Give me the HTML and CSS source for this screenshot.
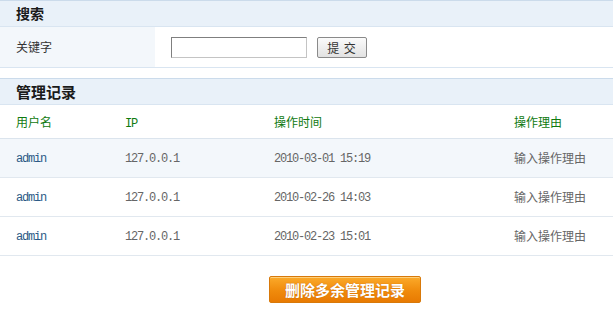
FILE: index.html
```html
<!DOCTYPE html>
<html lang="zh-CN">
<head>
    <meta charset="UTF-8">
    <title>管理记录</title>
    <link rel="stylesheet" href="styles.css">
</head>
<body>
    <div class="section">
        <div class="sec-title">搜索</div>
        <div class="search-row">
            <div class="label">关键字</div>
            <div class="field">
                <input type="text" class="kw">
                <button class="btn-submit">提 交</button>
            </div>
        </div>
    </div>

    <div class="section log">
        <div class="sec-title">管理记录</div>
        <div class="row head">
            <span>用户名</span>
            <span class="num">IP</span>
            <span>操作时间</span>
            <span>操作理由</span>
        </div>
        <div class="row alt">
            <span class="user">admin</span>
            <span class="num">127.0.0.1</span>
            <span class="num">2010-03-01 15:19</span>
            <span>输入操作理由</span>
        </div>
        <div class="row">
            <span class="user">admin</span>
            <span class="num">127.0.0.1</span>
            <span class="num">2010-02-26 14:03</span>
            <span>输入操作理由</span>
        </div>
        <div class="row">
            <span class="user">admin</span>
            <span class="num">127.0.0.1</span>
            <span class="num">2010-02-23 15:01</span>
            <span>输入操作理由</span>
        </div>
    </div>

    <div class="actions">
        <button class="btn-del">删除多余管理记录</button>
    </div>
</body>
</html>
```

FILE: styles.css
```css
body {
    margin: 0;
    font-family: "Noto Sans CJK SC", "Liberation Sans", sans-serif;
    font-size: 12px;
    color: #333;
    background: #fff;
    width: 613px;
}
.sec-title {
    height: 25px;
    line-height: 25px;
    padding-left: 16px;
    font-size: 14px;
    font-weight: bold;
    color: #1a1a1a;
    background: #e9f1f9;
    border-top: 1px solid #cbdbeb;
    border-bottom: 1px solid #d9e5f1;
}
.log .sec-title {
    font-size: 15px;
}
.search-row {
    display: flex;
    height: 40px;
    border-bottom: 1px solid #d9e5f1;
}
.search-row .label {
    width: 139px;
    padding-left: 16px;
    line-height: 40px;
    background: #f3f7fb;
}
.search-row .field {
    display: flex;
    align-items: center;
    padding-left: 16px;
    gap: 10px;
}
.kw {
    box-sizing: border-box;
    width: 136px;
    height: 21px;
    margin: 0;
    border: 1px solid #c4c4c4;
    border-top-color: #7f7f7f;
    border-left-color: #7f7f7f;
    padding: 0 2px;
}
.btn-submit {
    box-sizing: border-box;
    width: 50px;
    height: 21px;
    margin: 0;
    padding: 0;
    font-family: inherit;
    font-size: 12px;
    letter-spacing: 1px;
    color: #333;
    border: 1px solid #8a8a8a;
    border-radius: 2px;
    background: linear-gradient(#fbfbfb, #e2e2e2);
}
.log {
    margin-top: 10px;
}
.row {
    display: grid;
    grid-template-columns: 109px 149px 240px 1fr;
    padding-left: 16px;
    height: 38px;
    line-height: 38px;
    border-bottom: 1px solid #e1e8ef;
    color: #666;
}
.row.head {
    height: 33px;
    line-height: 33px;
    color: #0f7a0f;
    border-bottom-color: #dbe4ed;
}
.row.alt {
    background: #f3f7fb;
}
.num, .user {
    font-family: "Liberation Mono", monospace;
    letter-spacing: -1.2px;
    padding-top: 1px;
}
.row.head .num {
    padding-top: 3px;
}
.user {
    color: #2c5a86;
}
.actions {
    padding: 20px 0 0 269px;
}
.btn-del {
    box-sizing: border-box;
    width: 152px;
    height: 27px;
    margin: 0;
    padding: 0;
    font-family: inherit;
    font-size: 15px;
    font-weight: bold;
    color: #fff;
    border: 1px solid #d8790a;
    border-radius: 2px;
    background: linear-gradient(#fbaa2a, #f08b0c 55%, #e87a02);
    box-shadow: inset 0 1px 0 #fdd07c;
    text-shadow: 0 0 1px #b55c00;
}
```
